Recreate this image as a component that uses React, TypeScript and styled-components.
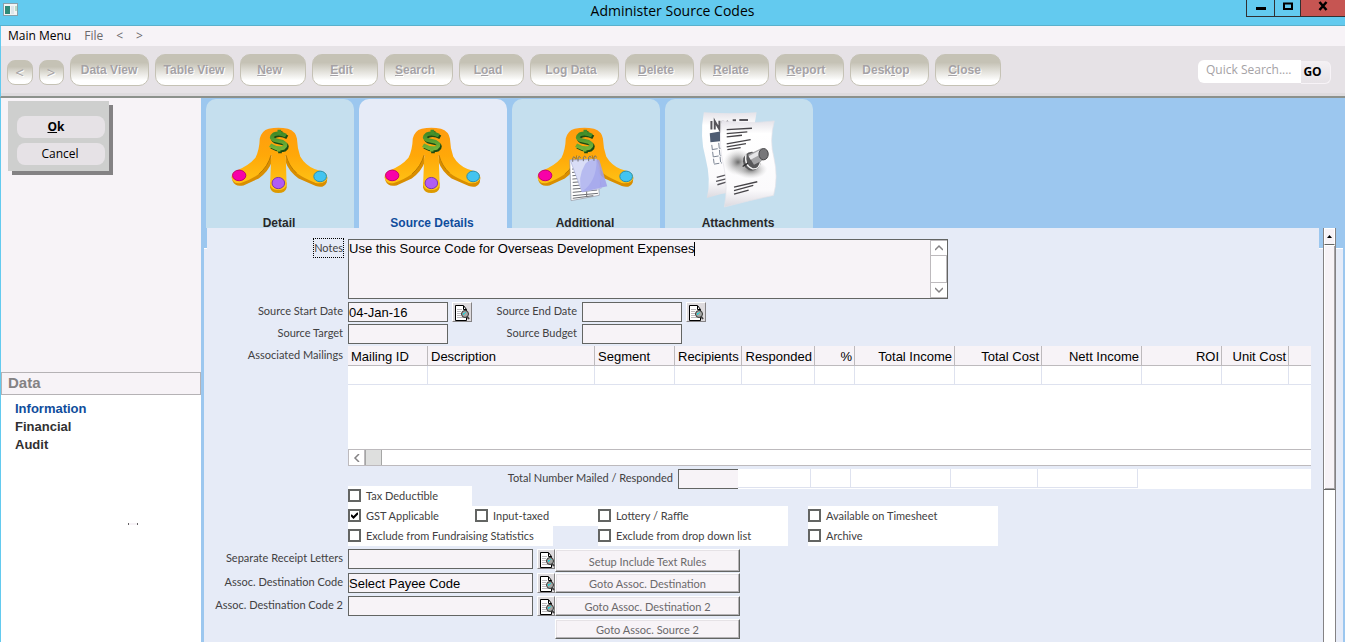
import React from "react";
import styled, { createGlobalStyle } from "styled-components";

const c = {
  title: "#63caef",
  sky: "#9cc7ef",
  panel: "#e6ebf7",
  tab: "#c5dfee",
  pink: "#f7f3f7",
  bar: "#e6e2e6",
  edge: "#636563",
  grid: "#bdbabd",
  cell: "#dee2ef",
  blue: "#104d9c",
};
const small = `Lato, "Liberation Sans", sans-serif`;
const ui = `"Open Sans", sans-serif`;

const Global = createGlobalStyle`
  * { box-sizing: border-box; }
  body { margin: 0; font: 13px/16px "Liberation Sans", sans-serif; color: #000; background: ${c.panel}; }
  button, input, textarea { font: inherit; color: inherit; margin: 0; padding: 0; border: 0; border-radius: 0; outline: 0; }
  svg { display: block; }
`;

const Window = styled.div`
  min-height: 100vh;
  display: flex;
  flex-direction: column;
`;
const TitleBar = styled.header`
  height: 26px;
  display: grid;
  grid-template-columns: 1fr auto 1fr;
  background: ${c.title};
  border-bottom: 1px solid #5ab0cc;
`;
const AppIcon = styled.svg`
  margin: 3px;
`;
const Title = styled.h1`
  margin: 0;
  font: 400 14px/22px ${ui};
`;
const WindowControls = styled.div`
  justify-self: end;
  display: flex;
  height: 17px;
  border: solid #313031;
  border-width: 0 0 1px 1px;
`;
const Control = styled.button<{ $w: number; $danger?: boolean }>`
  width: ${(p) => p.$w}px;
  display: flex;
  justify-content: center;
  background: ${(p) => (p.$danger ? "#c65552" : "transparent")};
  border-right: ${(p) => (p.$danger ? "0" : "1px solid #313031")};
`;
const MenuBar = styled.nav`
  height: 20px;
  display: flex;
  gap: 13px;
  padding-left: 7px;
  background: ${c.pink};
  border-left: 1px solid ${c.title};
`;
const MenuItem = styled.button<{ $strong?: boolean }>`
  background: none;
  font: 12px/20px ${ui};
  color: ${(p) => (p.$strong ? "#000" : "#6b696b")};
`;
const Toolbar = styled.div`
  height: 52px;
  display: flex;
  gap: 6px;
  padding: 8px 14px 0 6px;
  background: ${c.bar};
  border-left: 1px solid ${c.title};
  border-bottom: 2px solid #8c918c;
  box-shadow: inset 0 -3px #dedbde;
`;
const ToolButton = styled.button<{ $w: number; $key?: boolean }>`
  width: ${(p) => p.$w}px;
  height: 32px;
  padding: 0 ${(p) => (p.$key ? 7 : 1)}px 1px 0;
  border: 1px solid #c5c2b5;
  border-radius: 10px;
  background: linear-gradient(#c5c2b5 25%, #fff 85%);
  font-weight: 700;
  font-size: 12px;
  color: #a5a2a5;
  text-shadow: 1px 1px #fff;
  white-space: nowrap;
`;
const NavButton = styled(ToolButton)`
  height: 25px;
  margin-top: 6px;
  font: 15px/22px ${ui};
  border-radius: 8px;
`;
const Search = styled.form`
  margin: 6px 0 0 auto;
  display: flex;
  height: 24px;
`;
const SearchInput = styled.input`
  width: 103px;
  height: 23px;
  padding: 0 8px 4px;
  background: #fff;
  border-radius: 6px 0 0 6px;
  font: 12px/18px ${ui};
  &::placeholder { color: #a5a2a5; opacity: 1; }
`;
const GoButton = styled.button`
  width: 30px;
  margin-top: 1px;
  padding-right: 6px;
  border: solid ${c.pink};
  border-width: 0 1px 1px 0;
  border-radius: 0 6px 6px 0;
  background: linear-gradient(#f4f1f4, #e6e2e6);
  font: 700 12px/20px ${ui};
`;
const Body = styled.div`
  flex: 1;
  display: flex;
`;
const Sidebar = styled.aside`
  width: 201px;
  flex: none;
  display: flex;
  flex-direction: column;
  background: #fff;
  border-left: 1px solid ${c.title};
`;
const SideTop = styled.div`
  height: 274px;
  padding: 3px 7px;
  background: ${c.pink};
`;
const Actions = styled.div`
  width: 101px;
  height: 70px;
  display: flex;
  flex-direction: column;
  gap: 5px;
  padding: 15px 4px 0 9px;
  background: #cecfce;
  box-shadow: 4px 4px #848284;
`;
const ActionButton = styled.button<{ $main?: boolean }>`
  height: 22px;
  padding-right: ${(p) => (p.$main ? 10 : 2)}px;
  border-radius: 8px;
  background: ${c.bar};
  font: ${(p) => (p.$main ? 700 : 400)} 12px/20px ${ui};
`;
const SideHeading = styled.h2`
  margin: 0;
  height: 23px;
  padding-left: 6px;
  border: 1px solid #b5b2b5;
  background: ${c.pink};
  font: 700 15px/20px "Liberation Sans", sans-serif;
  color: #848284;
`;
const SideNav = styled.nav`
  display: flex;
  flex-direction: column;
  padding: 5px 14px;
`;
const SideLink = styled.a<{ $active?: boolean }>`
  font-weight: 700;
  line-height: 18px;
  text-decoration: none;
  color: ${(p) => (p.$active ? c.blue : "#313031")};
`;
const Grip = styled.span`
  width: 10px;
  height: 2px;
  margin: 64px 0 0 127px;
  background: ${c.pink};
  border: solid #636163;
  border-width: 0 1px;
`;
const Main = styled.main`
  flex: 1;
  min-width: 0;
  display: flex;
  flex-direction: column;
  padding: 1px 2px 0 3px;
  background: ${c.sky};
`;
const Tabs = styled.div`
  display: flex;
  gap: 5px;
  padding-left: 2px;
`;
const Tab = styled.button<{ $active?: boolean }>`
  width: 148px;
  height: 129px;
  display: flex;
  flex-direction: column;
  align-items: center;
  gap: 4px;
  padding: 8px 2px 0 0;
  border-radius: 10px 10px 0 0;
  background: ${(p) => (p.$active ? c.panel : c.tab)};
  color: ${(p) => (p.$active ? c.blue : "#292829")};
  font: 700 12px/12px "Liberation Sans", sans-serif;
`;
const TabArt = styled.span`
  height: 106px;
  flex: none;
  padding-left: 1px;
  display: flex;
  align-items: center;
`;
const Pane = styled.div`
  flex: 1;
  display: flex;
  background: linear-gradient(${c.sky} 20px, #fff 20px, #fff 21px, ${c.panel} 21px);
`;
const Form = styled.form`
  flex: 1;
  min-width: 0;
  margin: 0 4px 0 3px;
  padding: 11px 8px 3px 0;
  background: ${c.panel};
`;
const PaneScroll = styled.div`
  width: 13px;
  margin-right: 7px;
  display: flex;
  flex-direction: column;
  background: #fff;
  border: solid #848284;
  border-width: 0 1px;
`;
const ScrollUp = styled.button`
  height: 17px;
  display: grid;
  place-items: center;
  background: ${c.pink};
  border: 1px solid #fff;
  border-bottom: 1px solid ${c.edge};
`;
const ScrollThumb = styled.div`
  height: 244px;
  background: ${c.pink};
  border: solid #fff;
  border-width: 1px 0 0 1px;
  box-shadow: inset -1px -1px #a5a2a5, 0 1px ${c.edge};
`;
const Row = styled.div<{ $h?: number; $after?: number }>`
  display: flex;
  height: ${(p) => (p.$h ? p.$h + "px" : "auto")};
  margin-bottom: ${(p) => p.$after ?? 0}px;
`;
const Label = styled.label<{ $w?: number }>`
  width: ${(p) => p.$w ?? 141}px;
  flex: none;
  padding-right: 5px;
  text-align: right;
  font: 11px/18px ${small};
  color: #424142;
  white-space: nowrap;
`;
const FocusMark = styled.span`
  display: inline-block;
  outline: 1px dotted #000;
`;
const Field = styled.input<{ $w: number; $open?: boolean }>`
  width: ${(p) => p.$w}px;
  height: 20px;
  background: ${c.pink};
  border: 1px solid ${c.edge};
  border-right-width: ${(p) => (p.$open ? 0 : 1)}px;
`;
const NotesBox = styled.div`
  position: relative;
  width: 600px;
  height: 60px;
  display: flex;
  background: ${c.pink};
  border: 1px solid ${c.edge};
`;
const Notes = styled.textarea`
  flex: 1;
  resize: none;
  overflow: hidden;
  background: none;
  line-height: 18px;
`;
const Caret = styled.span`
  position: absolute;
  left: 345px;
  top: 2px;
  width: 1px;
  height: 14px;
  background: #000;
`;
const NotesScroll = styled.div`
  width: 17px;
  display: flex;
  flex-direction: column;
  justify-content: space-between;
  background: #fff;
  border: 1px solid ${c.grid};
`;
const Step = styled.button<{ $side: "top" | "bottom" | "right" }>`
  width: 16px;
  height: 15px;
  display: grid;
  place-items: center;
  background: #fff;
  border-${(p) => (p.$side === "top" ? "bottom" : p.$side === "bottom" ? "top" : "right")}: 1px solid ${c.grid};
`;
const Lookup = styled.button<{ $w: number }>`
  width: ${(p) => p.$w}px;
  height: 20px;
  margin-left: 4px;
  padding: 1px 0 0 2px;
  flex: none;
  background: #dedbde;
  border: solid;
  border-width: 1px;
  border-color: #fff #848284 #848284 #fff;
`;
const ListBox = styled.div`
  flex: 1;
  min-width: 0;
  background: #fff;
`;
const ListBody = styled.div`
  height: 103px;
  overflow: hidden;
`;
const Table = styled.table`
  width: 100%;
  table-layout: fixed;
  border-collapse: separate;
  border-spacing: 0;
`;
const Th = styled.th<{ $right?: boolean }>`
  height: 20px;
  padding: 2px 2px 0 3px;
  background: ${c.pink};
  border: solid ${c.grid};
  border-width: 0 1px 1px 0;
  font-weight: 400;
  line-height: 17px;
  white-space: nowrap;
  text-align: ${(p) => (p.$right ? "right" : "left")};
  &:last-child { border-right: 0; }
`;
const Td = styled.td`
  height: 19px;
  padding: 0;
  border: solid ${c.cell};
  border-width: 0 1px 1px 0;
  &:last-child { border-right: 0; }
`;
const ListScroll = styled.div`
  height: 17px;
  display: flex;
  border: solid ${c.grid};
  border-width: 1px 0 1px 1px;
`;
const ListThumb = styled.div`
  width: 17px;
  background: #dedfde;
  border: solid #a5a6a5;
  border-width: 0 1px;
`;
const Totals = styled.div`
  flex: 1;
  display: flex;
  background: #fff;
`;
const Total = styled.output<{ $w: number }>`
  width: ${(p) => p.$w}px;
  height: 19px;
  border: solid ${c.cell};
  border-width: 0 1px 1px 0;
`;
const Checks = styled.div`
  display: flex;
  margin: -3px 0 3px 141px;
`;
const CheckColumn = styled.div<{ $after?: number; $w?: number }>`
  display: flex;
  flex-direction: column;
  justify-content: flex-end;
  width: ${(p) => p.$w}px;
  margin-right: ${(p) => p.$after ?? 0}px;
`;
const CheckLine = styled.div`
  display: flex;
`;
const Check = styled.label<{ $w: number }>`
  width: ${(p) => p.$w}px;
  height: 20px;
  flex: none;
  display: flex;
  align-items: center;
  gap: 5px;
  background: #fff;
  font: 11px/20px ${small};
  color: #424142;
  white-space: nowrap;
`;
const CheckInput = styled.input`
  appearance: none;
  width: 13px;
  height: 13px;
  flex: none;
  border: 2px solid ${c.edge};
  background: #fff;
`;
const CheckBoxWrap = styled.span`
  position: relative;
  display: flex;
  padding-bottom: 1px;
`;
const CheckMark = styled.svg`
  position: absolute;
  left: 3px;
  top: 3px;
  pointer-events: none;
`;
const RuleButton = styled.button<{ $h: number; $indent?: boolean }>`
  width: 185px;
  height: ${(p) => p.$h}px;
  margin-left: ${(p) => (p.$indent ? 348 : 0)}px;
  padding-top: 2px;
  background: ${c.pink};
  border: solid;
  border-width: 1px;
  border-color: #fff ${c.edge} ${c.edge} #fff;
  box-shadow: inset -1px -1px #b5b2b5, inset 1px 1px ${c.bar};
  font: 11px/16px ${small};
  color: #6b696b;
`;

const Hand = ({ pad }: { pad?: boolean }) => (
  <svg width="100" height="67" viewBox="690 95 300 202" overflow="visible" aria-hidden="true">
    <defs>
      <linearGradient id="palm" x1="0" y1="0" x2="0" y2="1">
        <stop offset="0" stopColor="#ff9c10" />
        <stop offset=".45" stopColor="#ffa808" />
        <stop offset="1" stopColor="#ffc818" />
      </linearGradient>
      <linearGradient id="dollar" x1="0" y1="0" x2="0" y2="1">
        <stop offset="0" stopColor="#3f8a28" />
        <stop offset="1" stopColor="#74b438" />
      </linearGradient>
    </defs>
    <path fill="#d98e00" d="M812 178 Q798 218 768 237 L722 261 Q700 268 694 246 L697 258 Q705 277 730 271 L776 250 Q806 228 816 198Z" />
    <path fill="#d98e00" d="M858 178 Q872 218 902 240 L950 263 Q976 268 983 246 L981 262 Q972 281 948 273 L896 250 Q866 228 856 198Z" />
    <path fill="#dd9a00" d="M810 262 L810 278 Q814 294 835 294 Q856 294 860 278 L860 262Z" />
    <path
      fill="url(#palm)"
      d="M806 100 Q835 95 864 100 Q888 108 891 130 Q892 158 901 184 Q916 210 944 222 L970 230 Q985 238 982 252 Q972 268 948 264 Q912 250 890 234 Q864 212 857 178 L860 268 Q856 285 835 285 Q814 285 810 268 L814 178 Q804 214 778 236 Q748 256 722 264 Q700 268 694 248 Q693 234 708 227 Q746 212 766 188 Q778 164 779 130 Q784 106 806 100Z"
    />
    <path fill="none" stroke="#b87800" strokeWidth="3" d="M813 180 Q803 215 776 237 M858 180 Q866 212 890 234" />
    <ellipse cx="717" cy="241" rx="20" ry="16" fill="#f800a8" stroke="#c00070" strokeWidth="3" />
    <ellipse cx="835" cy="264" rx="19" ry="17" fill="#b05cf4" stroke="#7a38a8" strokeWidth="3" />
    <ellipse cx="961" cy="244" rx="19" ry="16" fill="#42c4f0" stroke="#268fb0" strokeWidth="3" />
    {["#1c4a12", "url(#dollar)"].map((stroke, i) => (
      <g key={i} transform={i ? undefined : "translate(4 5)"} fill="none" stroke={stroke}>
        <path strokeWidth="12" d="M858 121 Q838 110 822 117 Q808 127 823 134 L848 140 Q864 148 850 158 Q832 163 810 150" />
        <path strokeWidth="11" d="M838 103 V116 M836 157 V169" />
      </g>
    ))}
    {pad && (
      <g>
        <path fill="#fff" stroke="#8c8e9c" strokeWidth="2" d="M791 194 L873 192 L880 301 L795 317Z" />
        <path stroke="#6b6d73" strokeWidth="3" d="M798 222 L830 219 M798 232 L832 229 M799 242 L834 239 M799 252 L836 249 M800 262 L838 259 M800 272 L840 269 M800 282 L842 279 M800 292 L874 285 M800 302 L876 295 M800 310 L862 302" />
        <path fill="#d9ddf6" stroke="#aab0dc" strokeWidth="2" d="M793 196 L872 192 L886 280 L828 291Z" />
        <path fill="#9e9eea" fillOpacity=".86" d="M872 194 L880 194 L904 274 L826 291 Q872 262 872 194Z" />
        <path fill="#a8acee" fillOpacity=".7" d="M838 206 Q812 250 828 290 L880 278 Q892 226 872 194 Q850 192 838 206Z" />
        <path fill="none" stroke="#737173" strokeWidth="3" d="M800 200 V188 Q804 180 808 190 M816 199 V187 Q820 179 824 189 M832 198 V186 Q836 178 840 188 M848 198 V186 Q852 178 856 188 M864 197 V185 Q868 177 872 187 M842 290 V306" />
      </g>
    )}
  </svg>
);

const Papers = () => (
  <svg width="80" height="98" viewBox="115 50 240 295" aria-hidden="true">
    <defs>
      <linearGradient id="sheet" x1="0" y1="0" x2="0" y2="1">
        <stop offset="0" stopColor="#e4e2e8" />
        <stop offset=".15" stopColor="#fff" />
        <stop offset=".8" stopColor="#fbfafc" />
        <stop offset="1" stopColor="#dcdae0" />
      </linearGradient>
      <radialGradient id="shade">
        <stop offset="0" stopColor="#6b6b6b" />
        <stop offset="1" stopColor="#c8c8c8" stopOpacity="0" />
      </radialGradient>
    </defs>
    <path fill="url(#sheet)" d="M129 54 Q210 60 288 54 L272 150 L240 290 Q190 296 138 312 Q152 260 134 190 Q116 130 129 54Z" />
    <path stroke="#56545a" strokeWidth="6" fill="none" d="M152 80 V106 M162 106 V81 L176 105 V79 M186 79 V88 M198 80 L204 88 M216 78 L226 78 M236 77 L262 77" />
    <path fill="#4e5c72" d="M147 117 L178 112 V141 L149 144Z" />
    <path fill="none" stroke="#7b8594" strokeWidth="3" strokeDasharray="16 5" d="M153 152 L160 208 M174 146 L180 208 M155 166 L180 162 M158 188 L182 184 M160 210 L184 206" />
    <path stroke="#56545a" strokeWidth="4" d="M168 250 L196 242 M166 262 L196 254 M170 272 L196 264" />
    <path fill="url(#sheet)" stroke="#e4e2e8" strokeWidth="2" d="M184 79 Q260 90 341 80 Q326 140 340 190 Q354 250 339 304 Q270 318 191 339 Q202 280 190 220 Q172 150 184 79Z" />
    <ellipse cx="232" cy="204" rx="44" ry="40" fill="url(#shade)" />
    <ellipse cx="270" cy="226" rx="50" ry="28" fill="url(#shade)" />
    <path stroke="#464448" strokeWidth="4" d="M198 106 L274 102 M198 118 L260 113 M198 128 L244 123 M198 149 L270 136 M198 158 L256 148 M200 166 L240 160 M220 279 L290 263 M220 290 L278 274 M220 300 L264 288" />
    <ellipse cx="274" cy="201" rx="27" ry="28" fill="#58585a" />
    <path fill="none" stroke="#f4f4f4" strokeWidth="4" d="M256 180 Q250 216 276 224 Q296 226 300 202" />
    <path fill="#a4a4a6" d="M262 182 L302 162 L320 192 L280 212Z" />
    <path fill="#e6e6e8" d="M264 186 L300 167 L306 177 L270 197Z" />
    <ellipse cx="309" cy="180" rx="14" ry="17" fill="#77777a" stroke="#464648" strokeWidth="3" />
    <path stroke="#2c2c2e" strokeWidth="4" d="M246 217 L262 207" />
  </svg>
);

const LookupIcon = () => (
  <svg width="15" height="16" viewBox="0 0 15 16" aria-hidden="true">
    <path fill="#fff" stroke="#000" d="M.5 .5 H8.5 L11.5 4.5 V15.5 H.5Z" />
    <path fill="none" stroke="#000" d="M8.5 1 V4.5 H11.5" />
    <path stroke="#bdbabd" d="M2 4.5 H7 M2 6.5 H6 M2 8.5 H6 M2 10.5 H6 M2 12.5 H9" />
    <circle cx="10" cy="9" r="3.5" fill="#a5a6a5" stroke="#313431" />
    <path stroke="#21d3d6" d="M8 8.5 H10 M8 9.5 H9 M10 7.5 H11" />
    <path stroke="#424142" strokeWidth="2" d="M12 11.5 L14 14" />
  </svg>
);

const Chevron = ({ d }: { d: string }) => (
  <svg width="8" height="8" viewBox="0 0 8 8" fill="none" stroke="#848284" strokeWidth="1.5" aria-hidden="true">
    <path d={d} />
  </svg>
);

const tools = [
  { w: 79, pre: "Data View" },
  { w: 79, pre: "Table View" },
  { w: 66, key: "N", post: "ew" },
  { w: 66, key: "E", post: "dit" },
  { w: 69, key: "S", post: "earch" },
  { w: 65, pre: "L", key: "o", post: "ad" },
  { w: 89, pre: "Lo", key: "g", post: " Data" },
  { w: 69, key: "D", post: "elete" },
  { w: 69, key: "R", post: "elate" },
  { w: 69, key: "R", post: "eport" },
  { w: 79, pre: "Desk", key: "t", post: "op" },
  { w: 66, key: "C", post: "lose" },
];

const columns: [string, number | undefined, boolean][] = [
  ["Mailing ID", 80, false],
  ["Description", 167, false],
  ["Segment", 80, false],
  ["Recipients", 67, false],
  ["Responded", 73, true],
  ["%", 40, true],
  ["Total Income", 100, true],
  ["Total Cost", 87, true],
  ["Nett Income", 100, true],
  ["ROI", 80, true],
  ["Unit Cost", 67, true],
  ["", undefined, false],
];

const CheckField = ({ w, text, on }: { w: number; text: string; on?: boolean }) => {
  const [checked, setChecked] = React.useState(!!on);
  return (
    <Check $w={w}>
      <CheckBoxWrap>
        <CheckInput type="checkbox" checked={checked} onChange={() => setChecked(!checked)} />
        {checked && (
          <CheckMark width="7" height="7" viewBox="0 0 7 7">
            <path fill="none" stroke="#000" strokeWidth="2" d="M0 3 L2.5 5.5 L7 1" />
          </CheckMark>
        )}
      </CheckBoxWrap>
      {text}
    </Check>
  );
};

const codes = [
  { id: "letters", label: "Separate Receipt Letters", value: "", action: "Setup Include Text Rules", h: 23, after: 1 },
  { id: "dest1", label: "Assoc. Destination Code", value: "Select Payee Code", action: "Goto Assoc. Destination", h: 20, after: 3 },
  { id: "dest2", label: "Assoc. Destination Code 2", value: "", action: "Goto Assoc. Destination 2", h: 20, after: 3 },
];

export default function App() {
  return (
    <Window>
      <Global />
      <TitleBar>
        <AppIcon width="16" height="14" viewBox="0 0 16 14" aria-hidden="true">
          <rect x=".5" y=".5" width="14" height="12" fill="#f4f4f4" stroke="#8aa0aa" />
          <rect x="2" y="3" width="5" height="8" fill="#2f8a78" />
          <rect x="8" y="3" width="3" height="8" fill="#dde6ea" />
          <rect x="12" y="3" width="2" height="5" fill="#b8dcc8" />
        </AppIcon>
        <Title>Administer Source Codes</Title>
        <WindowControls>
          <Control $w={28} aria-label="Minimize">
            <svg width="10" height="12"><path d="M0 8.5H10" stroke="#000" strokeWidth="3" /></svg>
          </Control>
          <Control $w={26} aria-label="Maximize">
            <svg width="10" height="12"><path d="M1 3.5H9V9H1Z" fill="none" stroke="#000" strokeWidth="2" /></svg>
          </Control>
          <Control $w={44} $danger aria-label="Close window">
            <svg width="10" height="12"><path d="M1.5 2L8.5 10M8.5 2L1.5 10" stroke="#000" strokeWidth="2.5" /></svg>
          </Control>
        </WindowControls>
      </TitleBar>
      <MenuBar>
        <MenuItem $strong>Main Menu</MenuItem>
        <MenuItem>File</MenuItem>
        <MenuItem>&lt;</MenuItem>
        <MenuItem>&gt;</MenuItem>
      </MenuBar>
      <Toolbar>
        <NavButton $w={26}>&lt;</NavButton>
        <NavButton $w={25}>&gt;</NavButton>
        {tools.map((t, i) => (
          <ToolButton key={i} $w={t.w} $key={!!t.key}>
            {t.pre}
            {t.key && <u>{t.key}</u>}
            {t.post}
          </ToolButton>
        ))}
        <Search onSubmit={(e) => e.preventDefault()}>
          <SearchInput aria-label="Quick search" placeholder="Quick Search...." />
          <GoButton>GO</GoButton>
        </Search>
      </Toolbar>
      <Body>
        <Sidebar>
          <SideTop>
            <Actions>
              <ActionButton $main><u>O</u>k</ActionButton>
              <ActionButton>Cancel</ActionButton>
            </Actions>
          </SideTop>
          <SideHeading>Data</SideHeading>
          <SideNav>
            <SideLink href="#information" $active>Information</SideLink>
            <SideLink href="#financial">Financial</SideLink>
            <SideLink href="#audit">Audit</SideLink>
          </SideNav>
          <Grip />
        </Sidebar>
        <Main>
          <Tabs>
            <Tab><TabArt><Hand /></TabArt>Detail</Tab>
            <Tab $active><TabArt><Hand /></TabArt>Source Details</Tab>
            <Tab><TabArt><Hand pad /></TabArt>Additional</Tab>
            <Tab><TabArt><Papers /></TabArt>Attachments</Tab>
          </Tabs>
          <Pane>
            <Form onSubmit={(e) => e.preventDefault()}>
              <Row $h={60} $after={3}>
                <Label htmlFor="notes"><FocusMark>Notes</FocusMark></Label>
                <NotesBox>
                  <Notes id="notes" defaultValue="Use this Source Code for Overseas Development Expenses" />
                  <Caret />
                  <NotesScroll>
                    <Step type="button" $side="top" aria-label="Scroll up"><Chevron d="M0 6L4 2L8 6" /></Step>
                    <Step type="button" $side="bottom" aria-label="Scroll down"><Chevron d="M0 2L4 6L8 2" /></Step>
                  </NotesScroll>
                </NotesBox>
              </Row>
              <Row $h={20} $after={2}>
                <Label htmlFor="start">Source Start Date</Label>
                <Field id="start" $w={100} defaultValue="04-Jan-16" />
                <Lookup type="button" $w={20} aria-label="Pick start date"><LookupIcon /></Lookup>
                <Label htmlFor="end" $w={110}>Source End Date</Label>
                <Field id="end" $w={100} />
                <Lookup type="button" $w={20} aria-label="Pick end date"><LookupIcon /></Lookup>
              </Row>
              <Row $h={20} $after={2}>
                <Label htmlFor="target">Source Target</Label>
                <Field id="target" $w={100} />
                <Label htmlFor="budget" $w={134}>Source Budget</Label>
                <Field id="budget" $w={100} />
              </Row>
              <Row $after={3}>
                <Label as="span">Associated Mailings</Label>
                <ListBox>
                  <ListBody>
                    <Table aria-label="Associated Mailings">
                      <colgroup>
                        {columns.map(([name, w]) => <col key={name} style={{ width: w }} />)}
                      </colgroup>
                      <thead>
                        <tr>{columns.map(([name, , right]) => <Th key={name} $right={right}>{name}</Th>)}</tr>
                      </thead>
                      <tbody>
                        <tr>{columns.map(([name]) => <Td key={name} />)}</tr>
                      </tbody>
                    </Table>
                  </ListBody>
                  <ListScroll>
                    <Step type="button" $side="right" aria-label="Scroll left"><Chevron d="M6 0L2 4L6 8" /></Step>
                    <ListThumb />
                  </ListScroll>
                </ListBox>
              </Row>
              <Row $h={20}>
                <Label htmlFor="mailed" $w={471}>Total Number Mailed / Responded</Label>
                <Field id="mailed" $w={60} $open />
                <Totals>
                  {[73, 40, 100, 87, 100].map((w, i) => <Total key={i} $w={w} />)}
                </Totals>
              </Row>
              <Checks>
                <CheckColumn $w={250}>
                  <CheckField w={124} text="Tax Deductible" />
                  <CheckLine>
                    <CheckField w={127} text="GST Applicable" on />
                    <CheckField w={123} text="Input-taxed" />
                  </CheckLine>
                  <CheckField w={205} text="Exclude from Fundraising Statistics" />
                </CheckColumn>
                <CheckColumn $after={20}>
                  <CheckField w={190} text="Lottery / Raffle" />
                  <CheckField w={190} text="Exclude from drop down list" />
                </CheckColumn>
                <CheckColumn>
                  <CheckField w={190} text="Available on Timesheet" />
                  <CheckField w={190} text="Archive" />
                </CheckColumn>
              </Checks>
              {codes.map((r) => (
                <Row key={r.id} $h={r.h} $after={r.after}>
                  <Label htmlFor={r.id}>{r.label}</Label>
                  <Field id={r.id} $w={185} defaultValue={r.value} />
                  <Lookup type="button" $w={18} aria-label={"Look up " + r.label}><LookupIcon /></Lookup>
                  <RuleButton type="button" $h={r.h}>{r.action}</RuleButton>
                </Row>
              ))}
              <RuleButton type="button" $h={20} $indent>Goto Assoc. Source 2</RuleButton>
            </Form>
            <PaneScroll>
              <ScrollUp type="button" aria-label="Scroll page up">
                <svg width="5" height="3" aria-hidden="true"><path d="M0 3L2.5 0L5 3Z" /></svg>
              </ScrollUp>
              <ScrollThumb />
            </PaneScroll>
          </Pane>
        </Main>
      </Body>
    </Window>
  );
}
